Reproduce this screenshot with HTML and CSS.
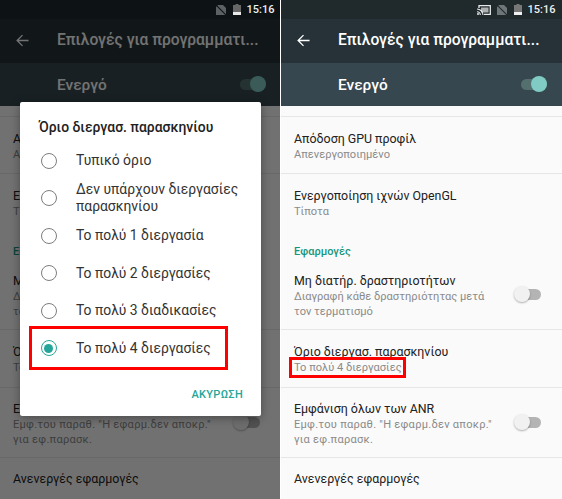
FILE: index.html
```html
<!DOCTYPE html>
<html lang="el">
<head>
<meta charset="utf-8">
<title>Επιλογές για προγραμματιστές</title>
<link rel="stylesheet" href="styles.css">
</head>
<body>
<div class="shots">
  <section class="phone dimmed">
    <div class="statusbar">
      <svg class="ic-nosim" viewBox="0 0 10 10"><path d="M2 0h5l3 3v7H0V2z" fill="currentColor"/><path d="M0 0l10 10" stroke="#0d1214" stroke-width="1.100"/></svg>
      <svg class="ic-batt" viewBox="0 0 8 11"><path d="M2.500 0h3v1H8v10H0V1h2.500z" fill="#666"/><rect y="8" width="8" height="3" fill="#e8e8e8"/></svg>
      <span class="time">15:16</span>
    </div>
    <header class="appbar">
      <svg class="back" viewBox="0 0 14 14"><path d="M13.500 7H1.500M7 1.200L1.200 7 7 12.800" fill="none" stroke="currentColor" stroke-width="1.400"/></svg>
      <h1>Επιλογές για προγραμματι...</h1>
    </header>
    <div class="master">
      <span>Ενεργό</span>
      <span class="switch on"></span>
    </div>
    <div class="list">
      <div class="rule first"></div>
      <div class="item"><div class="txt"><div class="t">Απόδοση GPU προφίλ</div><div class="s">Απενεργοποιημένο</div></div></div>
      <div class="rule"></div>
      <div class="item"><div class="txt"><div class="t">Ενεργοποίηση ιχνών OpenGL</div><div class="s">Τίποτα</div></div></div>
      <div class="cat">Εφαρμογές</div>
      <div class="item sw"><div class="txt"><div class="t">Μη διατήρ. δραστηριοτήτων</div><div class="s">Διαγραφή κάθε δραστηριότητας μετά τον τερματισμό</div></div><span class="switch"></span></div>
      <div class="rule"></div>
      <div class="item lim"><div class="txt"><div class="t">Όριο διεργασ. παρασκηνίου</div><div class="s">Το πολύ 4 διεργασίες</div></div></div>
      <div class="rule"></div>
      <div class="item sw tight"><div class="txt"><div class="t">Εμφάνιση όλων των ANR</div><div class="s wide">Εμφ.του παραθ. "Η εφαρμ.δεν αποκρ." για εφ.παρασκ.</div></div><span class="switch"></span></div>
      <div class="rule"></div>
      <div class="item tight"><div class="txt"><div class="t">Ανενεργές εφαρμογές</div></div></div>
    </div>
    <div class="scrim"></div>
    <div class="dialog">
      <h2>Όριο διεργασ. παρασκηνίου</h2>
      <div class="opts">
        <div class="opt"><span class="radio"></span><span>Τυπικό όριο</span></div>
        <div class="opt"><span class="radio"></span><span>Δεν υπάρχουν διεργασίες παρασκηνίου</span></div>
        <div class="opt"><span class="radio"></span><span>Το πολύ 1 διεργασία</span></div>
        <div class="opt"><span class="radio"></span><span>Το πολύ 2 διεργασίες</span></div>
        <div class="opt"><span class="radio"></span><span>Το πολύ 3 διαδικασίες</span></div>
        <div class="opt"><span class="radio sel"></span><span>Το πολύ 4 διεργασίες</span></div>
      </div>
      <div class="actions">ΑΚΥΡΩΣΗ</div>
    </div>
    <div class="mark mark-opt"></div>
  </section>

  <section class="phone">
    <div class="statusbar">
      <svg class="ic-cast" viewBox="0 0 14 10"><path d="M2 3V.7h11.300v8.600H7" fill="none" stroke="currentColor" stroke-width="1.300"/><path d="M0 4a6 6 0 0 1 6 6M0 6.700A3.300 3.300 0 0 1 3.300 10" fill="none" stroke="currentColor" stroke-width="1.100"/><circle cx="1" cy="9" r="1" fill="currentColor"/><rect x="4" y="2.500" width="7.500" height="5" fill="currentColor" opacity=".7"/></svg>
      <svg class="ic-nosim" viewBox="0 0 10 10"><path d="M2 0h5l3 3v7H0V2z" fill="currentColor"/><path d="M0 0l10 10" stroke="#20292c" stroke-width="1.100"/></svg>
      <svg class="ic-batt" viewBox="0 0 8 11"><path d="M2.500 0h3v1H8v10H0V1h2.500z" fill="#777"/><rect y="8" width="8" height="3" fill="#f0f0f0"/></svg>
      <span class="time">15:16</span>
    </div>
    <header class="appbar">
      <svg class="back" viewBox="0 0 14 14"><path d="M13.500 7H1.500M7 1.200L1.200 7 7 12.800" fill="none" stroke="currentColor" stroke-width="1.400"/></svg>
      <h1>Επιλογές για προγραμματι...</h1>
    </header>
    <div class="master">
      <span>Ενεργό</span>
      <span class="switch on"></span>
    </div>
    <div class="list">
      <div class="rule first"></div>
      <div class="item"><div class="txt"><div class="t">Απόδοση GPU προφίλ</div><div class="s">Απενεργοποιημένο</div></div></div>
      <div class="rule"></div>
      <div class="item"><div class="txt"><div class="t">Ενεργοποίηση ιχνών OpenGL</div><div class="s">Τίποτα</div></div></div>
      <div class="cat">Εφαρμογές</div>
      <div class="item sw"><div class="txt"><div class="t">Μη διατήρ. δραστηριοτήτων</div><div class="s">Διαγραφή κάθε δραστηριότητας μετά τον τερματισμό</div></div><span class="switch"></span></div>
      <div class="rule"></div>
      <div class="item lim"><div class="txt"><div class="t">Όριο διεργασ. παρασκηνίου</div><div class="s">Το πολύ 4 διεργασίες</div></div></div>
      <div class="rule"></div>
      <div class="item sw tight"><div class="txt"><div class="t">Εμφάνιση όλων των ANR</div><div class="s wide">Εμφ.του παραθ. "Η εφαρμ.δεν αποκρ." για εφ.παρασκ.</div></div><span class="switch"></span></div>
      <div class="rule"></div>
      <div class="item tight"><div class="txt"><div class="t">Ανενεργές εφαρμογές</div></div></div>
    </div>
    <div class="mark mark-sub"></div>
  </section>
</div>
</body>
</html>
```

FILE: styles.css
```css
* { box-sizing: border-box; }
html, body { margin: 0; padding: 0; }
body { width: 562px; height: 499px; overflow: hidden; background: #fff; font-family: Roboto, "Noto Sans", sans-serif; }
.shots { display: flex; justify-content: space-between; width: 562px; height: 499px; }
.phone { position: relative; width: 281px; height: 499px; overflow: hidden; background: #fafafa; }
.phone.dimmed { width: 280px; }
.phone > .statusbar, .phone > .appbar, .phone > .master, .phone > .list { width: 281px; }

.statusbar { height: 19px; background: #20292c; color: #6f7678; display: flex; align-items: center; justify-content: flex-end; padding-right: 6.500px; }
.dimmed .statusbar { position: relative; z-index: 1; background: #0d1214; color: #5c6163; }
.time { font-size: 11px; font-weight: 500; color: #eef0f0; margin-left: 6px; letter-spacing: 0; }
.ic-cast { width: 14px; height: 10px; color: #e8eaea; margin-right: 6px; }
.ic-nosim { width: 10px; height: 10px; margin-right: 7px; margin-top: 1px; }
.ic-batt { width: 8px; height: 11px; }

.appbar { height: 44px; background: #263238; color: #fff; display: flex; align-items: center; }
.back { width: 13px; height: 13px; margin-left: 16px; margin-bottom: 2px; }
.appbar h1 { margin: 0 0 2px 28px; font-size: 15.600px; font-weight: 500; white-space: nowrap; }

.master { height: 43px; background: #37474f; color: #fff; display: flex; align-items: center; justify-content: space-between; padding: 1px 15px 0 57px; font-size: 15.400px; font-weight: 500; }

.switch { position: relative; display: block; width: 26px; height: 11px; border-radius: 6px; background: #b4b4b4; flex: none; margin-bottom: 4px; }
.switch::after { content: ""; position: absolute; left: -1px; top: -3px; width: 16px; height: 16px; border-radius: 50%; background: #f1f1f1; box-shadow: 0 1px 2px rgba(0,0,0,.3); }
.switch.on { background: #53706f; margin-bottom: 1px; }
.switch.on::after { left: auto; right: 0; background: #80cbc4; box-shadow: none; }

.list { color: #212121; }
.rule { height: 1px; background: #e6e6e6; }
.rule.first { margin-top: 10px; }
.item { display: flex; align-items: center; justify-content: space-between; padding: 14px 21px 11px 13px; }
.item.sw { padding-bottom: 10px; }
.item.lim { padding-bottom: 12px; }
.item.tight { padding-top: 13px; }
.t { font-size: 12.400px; line-height: 16px; color: #212121; white-space: nowrap; }
.s { font-size: 11.100px; line-height: 15px; color: #8a8a8a; }
.s.wide { letter-spacing: .25px; }
.sw .txt { width: 207px; }
.cat { font-size: 11px; font-weight: 500; color: #14967f; padding: 14px 13px 0; line-height: 15px; }

.scrim { position: absolute; inset: 0; background: rgba(0,0,0,.55); }
.dialog { position: absolute; left: 20px; top: 102px; width: 241px; height: 314px; background: #fff; border-radius: 2px; box-shadow: 0 2px 10px rgba(0,0,0,.35); padding: 16px 0 15px 19px; color: #212121; display: flex; flex-direction: column; }
.dialog h2 { margin: 0; font-size: 13.900px; font-weight: 500; line-height: 18px; white-space: nowrap; }
.opts { margin-top: 6px; }
.opt { display: flex; align-items: center; font-size: 13.900px; line-height: 17px; min-height: 37.500px; color: #333; }
.radio { width: 16px; height: 16px; border: 1.800px solid #7d7d7d; border-radius: 50%; flex: none; margin: 0 19.500px 0 1.500px; position: relative; }
.radio.sel { border-color: #26a69a; }
.radio.sel::after { content: ""; position: absolute; inset: 2.500px; border-radius: 50%; background: #26a69a; }
.actions { margin-top: auto; padding-right: 18px; text-align: right; font-size: 11px; line-height: 13px; font-weight: 500; color: #26a69a; letter-spacing: .3px; }

.mark { position: absolute; border: 3px solid #f00; pointer-events: none; }
.mark-opt { left: 29px; top: 326px; width: 199px; height: 44px; }
.mark-sub { left: 8px; top: 357px; width: 117px; height: 21px; }
```
